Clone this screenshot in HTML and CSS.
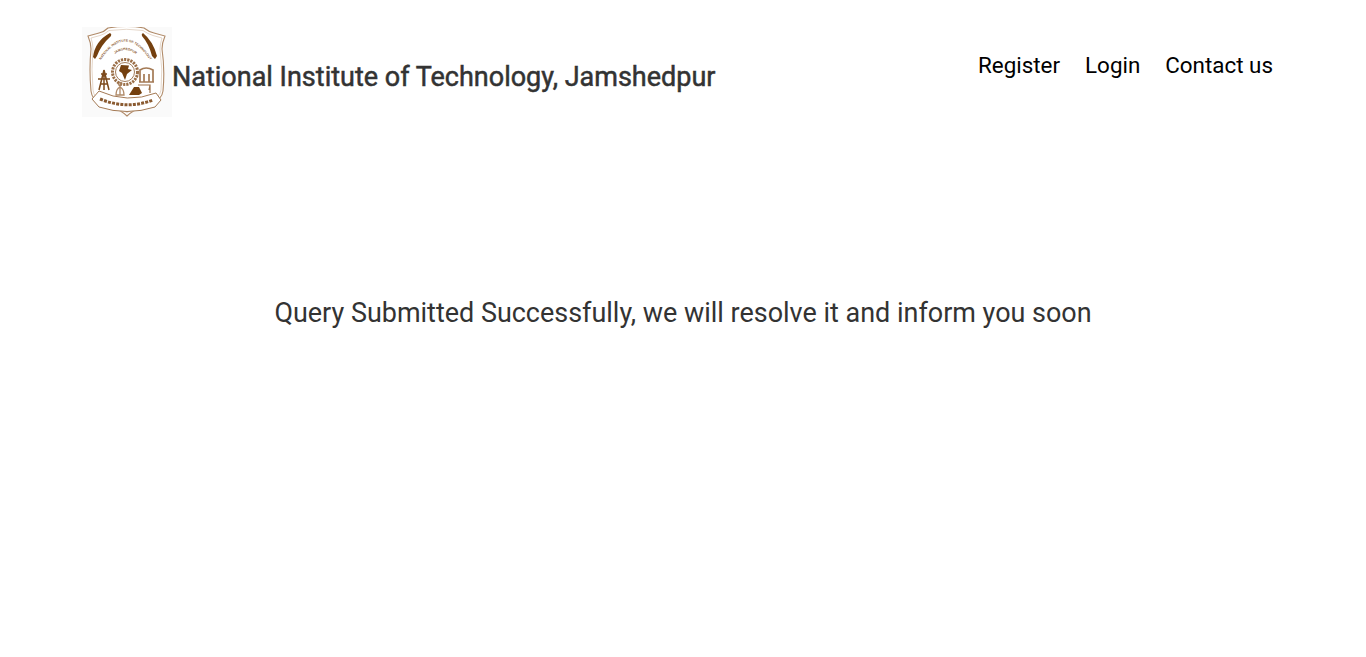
FILE: index.html
```html
<!DOCTYPE html>
<html lang="en">
<head>
<meta charset="utf-8">
<title>Query Submitted</title>
<link rel="stylesheet" href="styles.css">
</head>
<body>
<header class="header">
  <a class="brand" href="#">
    <svg class="logo" viewBox="0 0 90 90" aria-hidden="true">
      <rect width="90" height="90" fill="#fafafa"/>
      <path d="M6 9 L17 6 Q22 5 26 1 Q45 -2 62 1 Q67 5 72 6 L83 9 Q80 16 80 22 Q83 42 81 64 Q80 72 70 76 L58 81 Q50 84 45 89 Q40 84 32 81 L19 77 Q10 73 9 64 Q7 42 9 22 Q9 16 6 9Z" fill="#fff" stroke="#b08a68" stroke-width="1.1"/>
      <path d="M9 11 L18 8.500 Q23 7 27 3.500 Q45 1 61 3.500 Q66 7 71 8.500 L80 11 Q78 17 78 22 Q81 42 79 63 Q78 70 69 74 L57 79 Q50 81 45 86 Q40 81 33 79 L20 75 Q12 71 11 63 Q9 42 11 22 Q11 17 9 11Z" fill="none" stroke="#d4bca6" stroke-width=".6"/>
      <path d="M11 30 Q13 14 28 6 Q30 7 29 9 Q19 18 15 29 L13 32Z M75 29 Q71 14 61 6 Q59 7 60 9 Q67 17 70 29 L73 32Z" fill="#74400f"/>
      <path id="logo-arc-outer" d="M17 36 Q43 -7 70 36" fill="none"/>
      <path id="logo-arc-inner" d="M28 32 Q43 14 59 32" fill="none"/>
      <text class="logo-text"><textPath href="#logo-arc-outer" startOffset="50%" text-anchor="middle">NATIONAL INSTITUTE OF TECHNOLOGY</textPath></text>
      <text class="logo-text"><textPath href="#logo-arc-inner" startOffset="50%" text-anchor="middle">JAMSHEDPUR</textPath></text>
      <circle cx="43" cy="45" r="12.500" fill="none" stroke="#9b6f48" stroke-width="3" stroke-dasharray="2.200 1"/>
      <circle cx="43" cy="45" r="9.500" fill="#fff" stroke="#8a5a30" stroke-width=".8"/>
      <path d="M39 38 L47 38.500 L46 42 L50 43 L45 47 L43 53 L40 46 L37 44Z" fill="#74400f"/>
      <path d="M22 43 L17 63 M22 43 L27 63 M19 47 H25 M16 52 H28 M18 57 H26 M22 43 V63" stroke="#7c4a1c" stroke-width="1.500" fill="none"/>
      <path d="M58 55 V43 Q64 39 71 43 V55 M62 55 V47 M67 55 V47 M57 55 H72" fill="none" stroke="#a47a55" stroke-width="1.700"/>
      <path d="M38 68 V56 M34 68 Q34 62 38 60 Q42 62 42 68Z" fill="none" stroke="#b08a68" stroke-width="1.300"/>
      <circle cx="38" cy="57" r="1.800" fill="none" stroke="#a47a55"/>
      <path d="M47 68 L52 60 L57 60 L60 66 L57 68Z" fill="#74400f"/>
      <path d="M56 58 H68 L67 63 M68 58 V66" fill="none" stroke="#9b6f48" stroke-width="1.200"/>
      <path d="M10 72 L17 64 Q45 77 74 66 L79 73 L73 80 Q45 89 17 80Z" fill="#fff" stroke="#a47a55" stroke-width="1"/>
      <path d="M18 72 Q45 83 71 73" fill="none" stroke="#8a5a30" stroke-width="3" stroke-dasharray="3 1.200"/>
    </svg>
    <span class="title">National Institute of Technology, Jamshedpur</span>
  </a>
  <nav class="nav">
    <a href="#">Register</a>
    <a href="#">Login</a>
    <a href="#">Contact us</a>
  </nav>
</header>
<main class="main">
  <p class="message">Query Submitted Successfully, we will resolve it and inform you soon</p>
</main>
</body>
</html>
```
FILE: styles.css
```css
* { box-sizing: border-box; }
html, body { margin: 0; height: 100%; }
body { background: #fff; font-family: Roboto, sans-serif; color: #333; }
a { text-decoration: none; color: inherit; }
.header { display: flex; justify-content: space-between; align-items: flex-start; padding: 27px 93px 0 82px; }
.brand { display: flex; align-items: flex-end; }
.logo { width: 90px; height: 90px; display: block; }
.logo-text { font-family: "Liberation Sans", sans-serif; font-size: 3.300px; font-weight: 700; fill: #8a5a30; }
.title { font-size: 27px; font-weight: 400; line-height: 30px; margin-bottom: 25px; -webkit-text-stroke: 0.5px #333; }
.nav { display: flex; gap: 25px; margin-top: 24px; font-size: 22.4px; line-height: 28px; color: #000; }
.main { padding-top: 178px; }
.message { margin: 0; text-align: center; font-size: 26.960px; line-height: 36px; }
```
